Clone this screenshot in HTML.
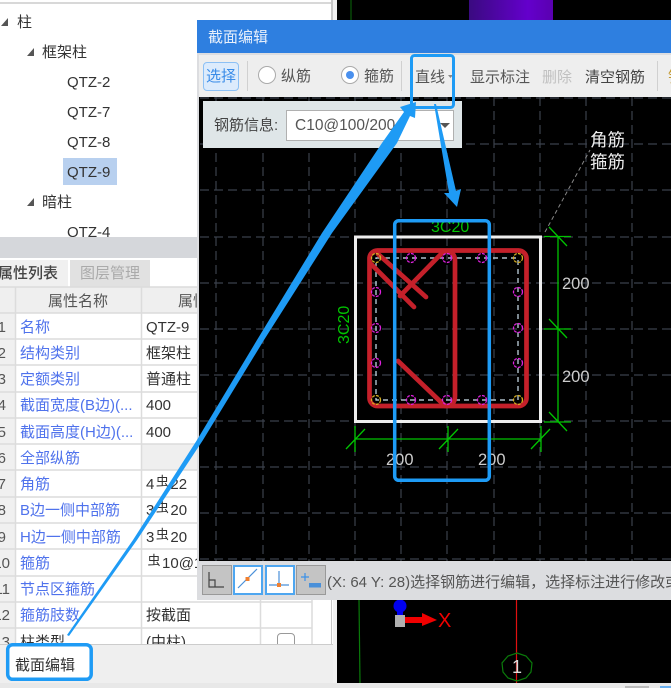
<!DOCTYPE html>
<html><head><meta charset="utf-8">
<style>
html,body{margin:0;padding:0;width:671px;height:688px;overflow:hidden;background:#000}
#w{position:absolute;left:0;top:0;width:671px;height:688px;overflow:hidden;filter:blur(.35px);font-family:"Liberation Sans","Noto Sans CJK SC",sans-serif;font-size:15px;color:#333}
.b{position:absolute;box-sizing:border-box}
.t{position:absolute;white-space:nowrap;line-height:20px;height:20px;margin-top:1px}
.l{color:#4f72ec}
.n{color:#555;right:665px}
.m{color:#555;right:661px}
.g{font-size:13px;position:relative;top:-3px;margin:0 1.500px}
svg{position:absolute;left:0;top:0}
</style></head><body><div id="w">
<!-- left panel -->
<div class="b" style="left:0;top:0;width:333px;height:237px;background:#fff"></div>
<div class="b" style="left:0;top:2px;width:332px;height:2px;background:#d8d8d8"></div>
<div class="b" style="left:331px;top:0;width:2px;height:237px;background:#c8c8c8"></div>
<div class="b" style="left:333px;top:0;width:4px;height:688px;background:#f2f2f2"></div>
<div class="b" style="left:0;top:237px;width:333px;height:23px;background:#d5d7db"></div>
<div class="b" style="left:63px;top:158px;width:54px;height:27px;background:#b8d0ef"></div>
<svg width="197" height="237"><g fill="#555">
<path d="M1 26L8 18V26Z"/><path d="M27 56L34 48V56Z"/><path d="M27 206L34 198V206Z"/></g></svg>
<div style="position:absolute;left:0;top:0;width:197px;height:237px;overflow:hidden">
<div class="t" style="left:17px;top:12px">柱</div>
<div class="t" style="left:42px;top:42px">框架柱</div>
<div class="t" style="left:67px;top:72px">QTZ-2</div>
<div class="t" style="left:67px;top:102px">QTZ-7</div>
<div class="t" style="left:67px;top:132px">QTZ-8</div>
<div class="t" style="left:67px;top:162px">QTZ-9</div>
<div class="t" style="left:42px;top:192px">暗柱</div>
<div class="t" style="left:67px;top:222px">QTZ-4</div>
</div>
<div class="b" style="left:0;top:258px;width:333px;height:387px;background:#fff"></div>
<div class="b" style="left:331px;top:258px;width:1px;height:387px;background:#c8c8c8"></div>
<div class="b" style="left:0;top:260px;width:68px;height:27px;background:#f0f0f0"></div>
<div class="b" style="left:70px;top:260px;width:80px;height:27px;background:#e1e1e1"></div>
<div class="t" style="left:-2px;top:263px;color:#444;font-weight:500">属性列表</div>
<div class="t" style="left:80px;top:263px;color:#aaa">图层管理</div>
<div class="b" style="left:0;top:287px;width:312px;height:26px;background:#efefef"></div>
<div class="b" style="left:0;top:313px;width:15px;height:331px;background:#f0f0f0"></div>
<div class="b" style="left:142px;top:444px;width:119px;height:26px;background:#efefef"></div>
<svg width="671" height="688"><g stroke="#dcdcdc" stroke-width="1.500" fill="none">
<path d="M0 287H312M0 313H312M0 339H312M0 365H312M0 392H312M0 418H312M0 444H312M0 470H312M0 497H312M0 523H312M0 549H312M0 576H312M0 602H312M0 628H312"/>
<path d="M15.500 287V644M141.500 287V644M260.500 287V644M312 287V644"/></g></svg>
<div class="t" style="left:48px;top:291px;color:#555">属性名称</div>
<div class="t" style="left:178px;top:291px;color:#555">属性值</div>
<div class="t n" style="top:317px">1</div>
<div class="t n" style="top:343px">2</div>
<div class="t n" style="top:369px">3</div>
<div class="t n" style="top:395px">4</div>
<div class="t n" style="top:422px">5</div>
<div class="t n" style="top:448px">6</div>
<div class="t n" style="top:474px">7</div>
<div class="t n" style="top:500px">8</div>
<div class="t n" style="top:527px">9</div>
<div class="t m" style="top:553px">10</div>
<div class="t m" style="top:579px">11</div>
<div class="t m" style="top:605px">12</div>
<div class="t m" style="top:632px">13</div>
<div class="t l" style="left:20px;top:317px">名称</div>
<div class="t l" style="left:20px;top:343px">结构类别</div>
<div class="t l" style="left:20px;top:369px">定额类别</div>
<div class="t l" style="left:20px;top:395px">截面宽度(B边)(...</div>
<div class="t l" style="left:20px;top:422px">截面高度(H边)(...</div>
<div class="t l" style="left:20px;top:448px">全部纵筋</div>
<div class="t l" style="left:20px;top:474px">角筋</div>
<div class="t l" style="left:20px;top:500px">B边一侧中部筋</div>
<div class="t l" style="left:20px;top:527px">H边一侧中部筋</div>
<div class="t l" style="left:20px;top:553px">箍筋</div>
<div class="t l" style="left:20px;top:579px">节点区箍筋</div>
<div class="t l" style="left:20px;top:605px">箍筋肢数</div>
<div class="t" style="left:20px;top:632px">柱类型</div>
<div class="t" style="left:146px;top:317px">QTZ-9</div>
<div class="t" style="left:146px;top:343px">框架柱</div>
<div class="t" style="left:146px;top:369px">普通柱</div>
<div class="t" style="left:146px;top:395px">400</div>
<div class="t" style="left:146px;top:422px">400</div>
<div class="t" style="left:146px;top:474px">4<span class="g">虫</span>22</div>
<div class="t" style="left:146px;top:500px">3<span class="g">虫</span>20</div>
<div class="t" style="left:146px;top:527px">3<span class="g">虫</span>20</div>
<div class="t" style="left:146px;top:553px"><span class="g">虫</span>10@100/200</div>
<div class="t" style="left:146px;top:605px">按截面</div>
<div class="t" style="left:146px;top:632px">(中柱)</div>
<div class="b" style="left:277px;top:633px;width:18px;height:20px;border:1.500px solid #999;border-radius:4px;background:#fff"></div>
<div class="b" style="left:0;top:644px;width:333px;height:39px;background:#efefef;border-top:1px solid #ccc"></div>
<div class="b" style="left:0;top:683px;width:671px;height:5px;background:#e8e8e8"></div>
<div class="b" style="left:625px;top:686px;width:24px;height:2px;background:#bbb"></div>
<div class="b" style="left:660px;top:686px;width:11px;height:2px;background:#6ab0f0"></div>
<div class="b" style="left:8px;top:646px;width:82px;height:33px;background:#fff"></div>
<div class="t" style="left:15px;top:655px;color:#333">截面编辑</div>

<!-- background canvas scraps -->
<svg width="671" height="688">
<defs><linearGradient id="p" x1="0" x2="1" y1="0" y2="0"><stop offset="0" stop-color="#3a0a80"/><stop offset=".7" stop-color="#6400cc"/><stop offset="1" stop-color="#5a00b0"/></linearGradient></defs>
<rect x="469" y="0" width="84" height="20" fill="url(#p)"/>
<path d="M351 0V20" stroke="#0a6a0a"/>
<path d="M359 600L360 683" stroke="#0a7a0a" stroke-width="1.200"/>
<path d="M516.500 600V683" stroke="#e01010" stroke-width="1.200"/>
<polygon points="517,653 526,656 532,663 531,672 526,678 517,681 508,678 503,672 502,663 508,656" fill="none" stroke="#0a7a0a" stroke-width="1.200"/>
<text x="517" y="673" font-size="18" fill="#ddd" text-anchor="middle" font-family="Liberation Sans">1</text>
<circle cx="400" cy="606" r="6.500" fill="#0000ee"/>
<rect x="397" y="610" width="6" height="6" fill="#0000ee"/>
<rect x="395" y="615" width="10" height="12" fill="#b0b0b0"/>
<path d="M405 617H422V613L437 620L422 626V623H405Z" fill="#f00000"/>
<text x="438" y="627" font-size="20" fill="#f00000" font-family="Liberation Sans">X</text>
</svg>

<!-- dialog -->
<div class="b" style="left:197px;top:20px;width:474px;height:580px;background:#dcdde0"></div>
<div class="b" style="left:197px;top:20px;width:474px;height:33px;background:#2e7fe0"></div>
<div class="t" style="left:208px;top:27px;color:#e8f0fb">截面编辑</div>
<div class="b" style="left:199px;top:55px;width:472px;height:42px;background:#eee"></div>
<div class="b" style="left:203px;top:62px;width:36px;height:29px;background:#dcebfc;border:1.500px solid #8cc0f5;border-radius:4px"></div>
<div class="t" style="left:206px;top:66px;color:#3a8ce8">选择</div>
<div class="b" style="left:247px;top:61px;width:1px;height:30px;background:#d0d0d0"></div>
<div class="b" style="left:401px;top:61px;width:1px;height:30px;background:#d0d0d0"></div>
<div class="b" style="left:657px;top:61px;width:1px;height:30px;background:#d0d0d0"></div>
<div class="b" style="left:258px;top:66px;width:18px;height:18px;border:1.500px solid #aaa;border-radius:50%;background:#fff"></div>
<div class="t" style="left:281px;top:66px;color:#555">纵筋</div>
<div class="b" style="left:341px;top:66px;width:18px;height:18px;border:1.500px solid #aaa;border-radius:50%;background:#fff"></div>
<div class="b" style="left:346px;top:71px;width:8px;height:8px;border-radius:50%;background:#4a90ee"></div>
<div class="t" style="left:364px;top:66px;color:#555">箍筋</div>
<div class="t" style="left:415px;top:67px;color:#555">直线</div>
<div class="t" style="left:470px;top:67px;color:#555">显示标注</div>
<div class="t" style="left:542px;top:67px;color:#c0c0c0">删除</div>
<div class="t" style="left:585px;top:67px;color:#444">清空钢筋</div>
<div class="b" style="left:199px;top:97px;width:472px;height:464px;background:#000"></div>
<svg width="671" height="688">
<path d="M448 75H453L450.500 78Z" fill="#888"/>
<path d="M216 97V561M263 97V561M309 97V561M355 97V561M401 97V561M447 97V561M494 97V561M540 97V561M586 97V561M632 97V561M200 98H671M200 144H671M200 190H671M200 237H671M200 283H671M200 329H671M200 375H671M200 421H671M200 467H671M200 513H671M200 559H671" stroke="#3b414b" stroke-width="1.200" stroke-dasharray="9 5" fill="none"/>
<path d="M545 232L590 150" stroke="#888" stroke-dasharray="4 3" fill="none"/>
<rect x="355.500" y="237" width="185" height="184.500" fill="none" stroke="#eee" stroke-width="3"/>
<g stroke="#00c400" stroke-width="1.300" fill="none">
<path d="M558 236V422M544 236.500H571M544 329H571M544 422H571M549 227L567 246M549 319L567 338M549 412L567 431"/>
<path d="M355 439H541M355 426V452M448 426V452M541 426V452M346 449L365 429M439 449L458 429M531 449L550 429"/>
</g>
<path d="M376 258H518V400H376Z" fill="none" stroke="#cfe3f0" stroke-width="1.200" stroke-dasharray="5 4"/>
<g fill="none" stroke="#c4202a" stroke-width="4.700" stroke-linecap="round" stroke-linejoin="round">
<rect x="369.500" y="250.500" width="157" height="155.500" rx="8"/>
<path d="M445 251Q455 251 455 261V396Q455 406 445 406"/>
<path d="M378 254L426 297M370 263L414 307M443 252L400 296M398 361L444 405"/>
</g>
<g fill="none" stroke="#e020e0" stroke-width="1.300" stroke-dasharray="3 1.200">
<circle cx="411" cy="258" r="4.500"/><circle cx="447" cy="258" r="4.500"/><circle cx="482" cy="258" r="4.500"/>
<circle cx="411" cy="400" r="4.500"/><circle cx="447" cy="400" r="4.500"/><circle cx="482" cy="400" r="4.500"/>
<circle cx="376" cy="292" r="4.500"/><circle cx="376" cy="328" r="4.500"/><circle cx="376" cy="363" r="4.500"/>
<circle cx="518" cy="292" r="4.500"/><circle cx="518" cy="328" r="4.500"/><circle cx="518" cy="363" r="4.500"/>
</g>
<g fill="none" stroke="#d8b020" stroke-width="1.300" stroke-dasharray="3 1.200">
<circle cx="376" cy="258" r="4.500"/><circle cx="518" cy="258" r="4.500"/><circle cx="376" cy="400" r="4.500"/><circle cx="518" cy="400" r="4.500"/>
</g>
<g font-family="Liberation Sans" font-size="16.500" fill="#ccc">
<text x="562" y="289">200</text><text x="562" y="382">200</text><text x="386" y="465">200</text><text x="478" y="465">200</text>
</g>
<g font-family="Liberation Sans" font-size="16" fill="#00c400">
<text x="431" y="232">3C20</text>
<text transform="translate(349,344) rotate(-90)">3C20</text>
</g>
</svg>
<div class="b" style="left:203px;top:101px;width:259px;height:47px;background:#dfe6e8"></div>
<div class="t" style="left:214px;top:115px;color:#444">钢筋信息:</div>
<div class="b" style="left:286px;top:110px;width:168px;height:31px;background:#fff;border:1.500px solid #b0b0b0"></div>
<div class="t" style="left:295px;top:115px;color:#555;font-size:15.500px">C10@100/200</div>
<svg width="671" height="688"><path d="M440 123H450L445 128Z" fill="#555"/></svg>
<div class="t" style="left:590px;top:129px;color:#eee;font-size:17.500px">角筋</div>
<div class="t" style="left:590px;top:151px;color:#eee;font-size:17.500px">箍筋</div>
<!-- status bar -->
<div class="b" style="left:197px;top:561px;width:474px;height:39px;background:#dcdde0"></div>
<div class="b" style="left:202px;top:565px;width:30px;height:30px;background:#c4c4c4;border:1px solid #999"></div>
<div class="b" style="left:233px;top:565px;width:30px;height:30px;background:#fff;border:2px solid #4ea6f0"></div>
<div class="b" style="left:265px;top:565px;width:30px;height:30px;background:#fff;border:2px solid #4ea6f0"></div>
<div class="b" style="left:296px;top:565px;width:30px;height:30px;background:#c4c4c4;border:1px solid #999"></div>
<svg width="671" height="688">
<path d="M209 572V587H224M209 580H215V587" fill="none" stroke="#444" stroke-width="1.200"/>
<path d="M238 588L257 569" stroke="#4a90d9" stroke-width="1.200"/><rect x="245.500" y="577" width="4" height="4" fill="#f08030"/>
<path d="M279 571V585M269 585H289" stroke="#4a90d9" stroke-width="1.200"/><rect x="277" y="583" width="4" height="4" fill="#f08030"/>
<path d="M301 577H309M305 573V581" stroke="#3a90e8" stroke-width="1.200"/><rect x="309" y="583" width="12" height="4.500" fill="#4a90d9"/>
</svg>
<div class="t" style="left:327px;top:572px;color:#555;width:344px;overflow:hidden">(X: 64 Y: 28)选择钢筋进行编辑，选择标注进行修改或</div>
<div class="t" style="left:668px;top:67px;color:#c49a30;width:3px;overflow:hidden">钢</div>

<!-- annotations -->
<svg width="671" height="688" fill="#1e9bf5">
<rect x="411.500" y="55.500" width="42" height="52" rx="3" fill="none" stroke="#1e9bf5" stroke-width="3"/>
<rect x="394.700" y="220.700" width="94.600" height="259.600" rx="4" fill="none" stroke="#1e9bf5" stroke-width="3.500"/>
<rect x="7.700" y="644.700" width="83.500" height="34.600" rx="5" fill="none" stroke="#1e9bf5" stroke-width="3.500"/>
<polygon points="67,635 133,540 197,440 257,340 322,233 382,143 404,112 400,107 416,102 415,118 410,116 397,143 332,233 264,340 203,440 137,540 69,636"/>
<polygon points="434,104 436,104 456,191 461,189 457,207 444,193 449,193"/>
</svg>
</div></body></html>
